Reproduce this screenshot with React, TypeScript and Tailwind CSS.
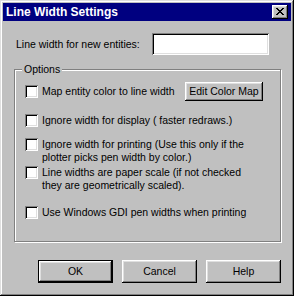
const raised =
  "shadow-[inset_-1px_-1px_#000,inset_1px_1px_#fff,inset_-2px_-2px_#808080,inset_2px_2px_#dfdfdf]"
const sunken =
  "shadow-[inset_1px_1px_#808080,inset_-1px_-1px_#fff,inset_2px_2px_#000,inset_-2px_-2px_#dfdfdf]"

function Check() {
  return <div className={`w-[13px] h-[13px] shrink-0 bg-white ${sunken}`} />
}

function Button({ label, primary }: { label: string; primary?: boolean }) {
  if (primary) {
    return (
      <button className="w-[75px] h-[23px] border border-black bg-[#c0c0c0] p-0">
        <span
          className={`flex w-full h-full items-center justify-center ${raised}`}
        >
          {label}
        </span>
      </button>
    )
  }
  return (
    <button
      className={`w-[75px] h-[23px] bg-[#c0c0c0] flex items-center justify-center ${raised}`}
    >
      {label}
    </button>
  )
}

function Option({ children, className }: { children: React.ReactNode; className?: string }) {
  return (
    <div className={`flex items-start gap-[4px] ${className ?? ""}`}>
      <Check />
      <div className="leading-[13px]">{children}</div>
    </div>
  )
}

export default function App() {
  return (
    <div
      className="w-[294px] h-[296px] bg-[#c0c0c0] p-[3px] flex flex-col text-[10.5px] leading-[13px] text-black shadow-[inset_-1px_-1px_#000,inset_1px_1px_#dfdfdf,inset_-2px_-2px_#808080,inset_2px_2px_#fff]"
      style={{ fontFamily: '"Liberation Sans", Arial, sans-serif' }}
    >
      {/* title bar */}
      <div className="h-[18px] bg-[#000080] flex items-center justify-between pl-[3px] pr-[3px]">
        <span className="text-white font-bold text-[12px]">Line Width Settings</span>
        <div className={`w-[16px] h-[14px] bg-[#c0c0c0] flex items-center justify-center ${raised}`}>
          <svg width="8" height="7" viewBox="0 0 8 7" shapeRendering="crispEdges" className="-mt-[1px]">
            <path
              d="M0 0h2v1h-2zM6 0h2v1h-2zM1 1h2v1h-2zM5 1h2v1h-2zM2 2h4v1h-4zM3 3h2v1h-2zM2 4h4v1h-4zM1 5h2v1h-2zM5 5h2v1h-2zM0 6h2v1h-2zM6 6h2v1h-2z"
              fill="#000"
            />
          </svg>
        </div>
      </div>

      {/* entity width row */}
      <div className="flex items-center mt-[12px] pl-[13px]">
        <span className="w-[136px]">Line width for new entities:</span>
        <div className={`w-[117px] h-[22px] bg-white ${sunken}`} />
      </div>

      {/* options group */}
      <div className="relative ml-[11px] mt-[14px] w-[267px] h-[173px] border border-[#808080] shadow-[1px_1px_#fff,inset_1px_1px_#fff] pl-[10px] pt-[12px]">
        <span className="absolute -top-[7px] left-[7px] bg-[#c0c0c0] px-[2px]">Options</span>

        <div className="flex items-center h-[19px]">
          <Check />
          <span className="ml-[4px] w-[143px]">Map entity color to line width</span>
          <button className={`w-[78px] h-[19px] bg-[#c0c0c0] flex items-center justify-center ${raised}`}>
            Edit Color Map
          </button>
        </div>

        <Option className="mt-[13px]">Ignore width for display ( faster redraws.)</Option>
        <Option className="mt-[11px]">
          Ignore width for printing (Use this only if the
          <br />
          plotter picks pen width by color.)
        </Option>
        <Option className="mt-[2px]">
          Line widths are paper scale (if not checked
          <br />
          they are geometrically scaled).
        </Option>
        <Option className="mt-[14px]">Use Windows GDI pen widths when printing</Option>
      </div>

      {/* dialog buttons */}
      <div className="flex gap-[9px] mt-[18px] ml-[35px]">
        <Button label="OK" primary />
        <Button label="Cancel" />
        <Button label="Help" />
      </div>
    </div>
  )
}
